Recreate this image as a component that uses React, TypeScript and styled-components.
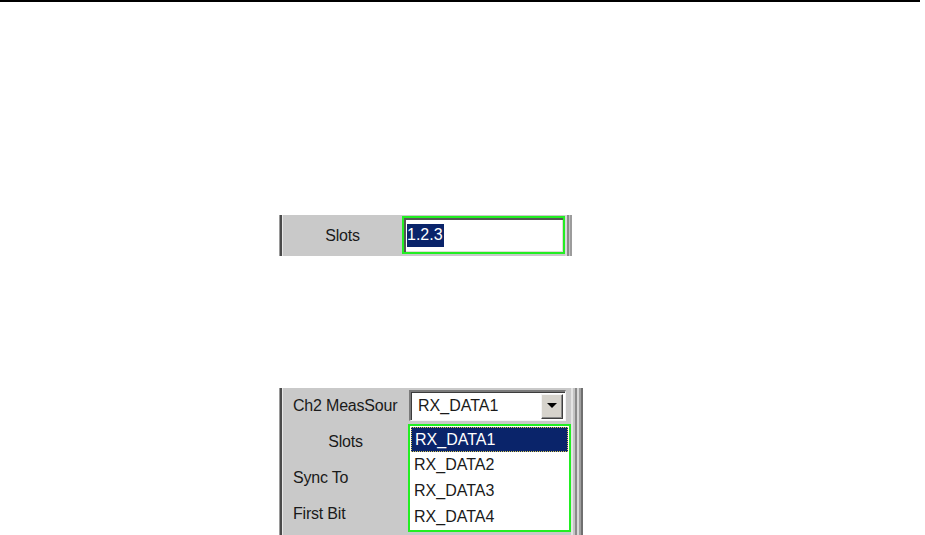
import React from 'react';
import styled, { createGlobalStyle } from 'styled-components';

const GlobalStyle = createGlobalStyle`
  html, body {
    margin: 0;
    padding: 0;
    background: #ffffff;
    overflow: hidden;
  }
  body {
    font-family: "Liberation Sans", Arial, sans-serif;
  }
`;

const Page = styled.div`
  width: 925px;
  height: 535px;
  overflow: hidden;
  display: flex;
  flex-direction: column;
`;

const TopRule = styled.div`
  height: 2px;
  width: 920px;
  flex-shrink: 0;
  background: #000000;
`;

const Stage = styled.div<{ $top: number }>`
  margin-top: ${p => p.$top}px;
  padding-left: 279px;
  display: flex;
  flex-shrink: 0;
`;

const Panel = styled.div`
  display: flex;
  background: #c9c9c9;
  color: #1a1a1a;
  font-size: 16px;
  position: relative;
`;

const LeftEdge = styled.div`
  width: 4px;
  flex-shrink: 0;
  background: linear-gradient(to right, #9a9a9a 0 1px, #4a4a4a 1px 3px, #e8e8e8 3px 4px);
`;

const RightEdge = styled.div<{ $wide?: boolean }>`
  width: ${p => (p.$wide ? 12 : 7)}px;
  flex-shrink: 0;
  background: ${p =>
    p.$wide
      ? 'linear-gradient(to right, #e4e4e4 0 2px, #c4c4c4 2px 4px, #8a8a8a 4px 6px, #d8d8d8 6px 8px, #a0a0a0 8px 10px, #707070 10px 12px)'
      : 'linear-gradient(to right, #d8d8d8 0 2px, #8a8a8a 2px 4px, #c4c4c4 4px 5px, #9c9c9c 5px 7px)'};
`;

const Body = styled.div<{ $label: number; $pb: number }>`
  display: grid;
  grid-template-columns: ${p => p.$label}px 163px;
  padding-bottom: ${p => p.$pb}px;
`;

const Label = styled.div<{ $center?: boolean; $h: number }>`
  height: ${p => p.$h}px;
  display: flex;
  align-items: center;
  justify-content: ${p => (p.$center ? 'center' : 'flex-start')};
  padding-left: ${p => (p.$center ? 0 : 10)}px;
  white-space: nowrap;
  letter-spacing: -0.2px;
`;

const FieldCell = styled.div<{ $h: number }>`
  height: ${p => p.$h}px;
  display: flex;
  align-items: flex-start;
`;

const TextInput = styled.div`
  box-sizing: border-box;
  width: 163px;
  height: 38px;
  margin-top: 1px;
  border: 2px solid #22ee22;
  background: #ffffff;
  display: flex;
  align-items: center;
  padding: 0 0 0 3px;
  box-shadow: inset 2px 2px 0 #555555, inset -1px -1px 0 #e0dcd4;
`;

const Selected = styled.span`
  background: #0a246a;
  color: #ffffff;
  padding: 2px 1px 3px 0;
`;

const Select = styled.div`
  box-sizing: border-box;
  width: 157px;
  height: 31px;
  margin-left: 1px;
  margin-top: 2px;
  background: #ffffff;
  display: flex;
  align-items: center;
  justify-content: space-between;
  padding: 2px 2px 2px 7px;
  border-top: 2px solid #7a7a7a;
  border-left: 2px solid #7a7a7a;
  border-bottom: 1px solid #f4f4f4;
  border-right: 1px solid #f4f4f4;
  box-shadow: inset 1px 1px 0 #3c3c3c;
`;

const ArrowButton = styled.div`
  box-sizing: border-box;
  width: 22px;
  height: 25px;
  background: #d6d3cc;
  border-top: 1px solid #f4f4f4;
  border-left: 1px solid #f4f4f4;
  border-right: 1px solid #404040;
  border-bottom: 1px solid #404040;
  box-shadow: inset -1px -1px 0 #8a8a8a;
  display: flex;
  align-items: center;
  justify-content: center;
`;

const Arrow = styled.div`
  width: 0;
  height: 0;
  border-left: 5px solid transparent;
  border-right: 5px solid transparent;
  border-top: 5px solid #000000;
  margin-bottom: 1px;
`;

const DropList = styled.div`
  position: absolute;
  left: 129px;
  top: 36px;
  box-sizing: border-box;
  width: 163px;
  height: 108px;
  background: #ffffff;
  border: 2px solid #22ee22;
  display: flex;
  flex-direction: column;
`;

const Item = styled.div<{ $active?: boolean }>`
  box-sizing: border-box;
  height: ${p => (p.$active ? 25 : 26)}px;
  display: flex;
  align-items: center;
  padding-left: ${p => (p.$active ? 3 : 4)}px;
  margin: ${p => (p.$active ? '1px 1px 0 1px' : '0')};
  background: ${p => (p.$active ? '#0a246a' : 'transparent')};
  color: ${p => (p.$active ? '#ffffff' : '#1a1a1a')};
  border: ${p => (p.$active ? '1px dotted #d8c858' : 'none')};
`;

const rows = [
  { label: 'Ch2 MeasSour', center: false },
  { label: 'Slots', center: true },
  { label: 'Sync To', center: false },
  { label: 'First Bit', center: false },
];

const items = ['RX_DATA1', 'RX_DATA2', 'RX_DATA3', 'RX_DATA4'];

export default function App() {
  return (
    <Page>
      <GlobalStyle />
      <TopRule />
      <Stage $top={213}>
        <Panel>
          <LeftEdge />
          <Body $label={119} $pb={0}>
            <Label $center $h={41}>Slots</Label>
            <FieldCell $h={41}>
              <TextInput>
                <Selected>1.2.3</Selected>
              </TextInput>
            </FieldCell>
          </Body>
          <RightEdge />
        </Panel>
      </Stage>
      <Stage $top={132}>
        <Panel>
          <LeftEdge />
          <Body $label={125} $pb={8}>
            {rows.map((r, i) => (
              <React.Fragment key={r.label}>
                <Label $center={r.center} $h={36}>{r.label}</Label>
                <FieldCell $h={36}>
                  {i === 0 && (
                    <Select>
                      RX_DATA1
                      <ArrowButton>
                        <Arrow />
                      </ArrowButton>
                    </Select>
                  )}
                </FieldCell>
              </React.Fragment>
            ))}
          </Body>
          <RightEdge $wide />
          <DropList>
            {items.map((it, i) => (
              <Item key={it} $active={i === 0}>{it}</Item>
            ))}
          </DropList>
        </Panel>
      </Stage>
    </Page>
  );
}
